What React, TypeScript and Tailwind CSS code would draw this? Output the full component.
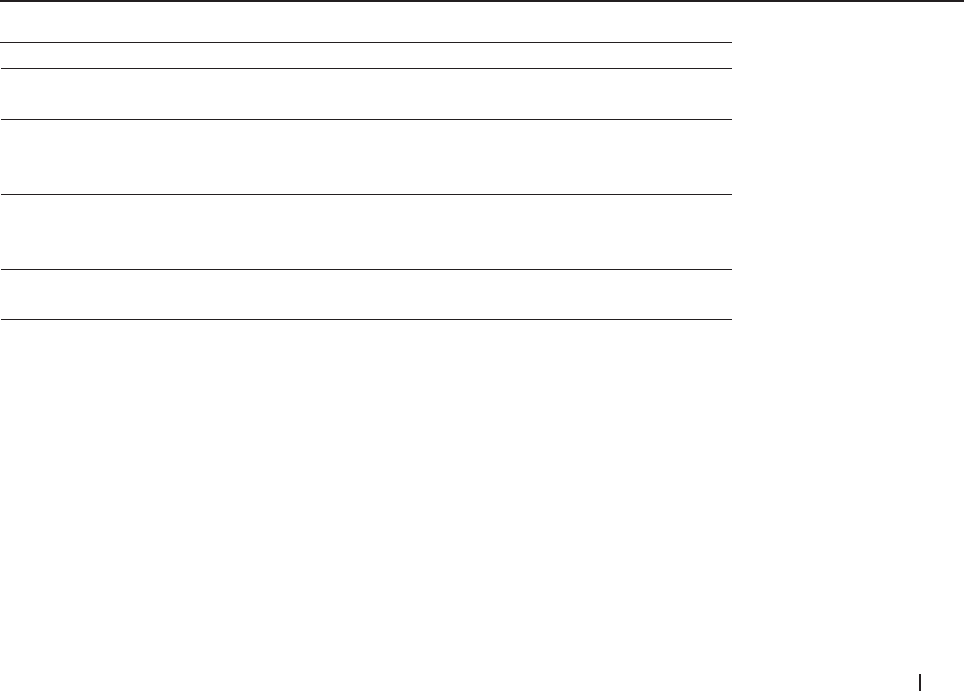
export default function App() {
  const rows = [26, 51, 75, 75, 50];

  return (
    <div className="flex h-[691px] flex-col bg-white">
      <div className="h-[2px] bg-[#231f20]" />

      <div className="mt-[40px] w-[732px] border-t border-[#231f20]">
        {rows.map((h, i) => (
          <div
            key={i}
            className="ml-[1px] border-b border-[#231f20]"
            style={{ height: h }}
          />
        ))}
      </div>

      <div className="mt-auto flex justify-end pr-[43px]">
        <div className="h-[17px] w-[2px] bg-[#231f20]" />
      </div>
    </div>
  );
}
